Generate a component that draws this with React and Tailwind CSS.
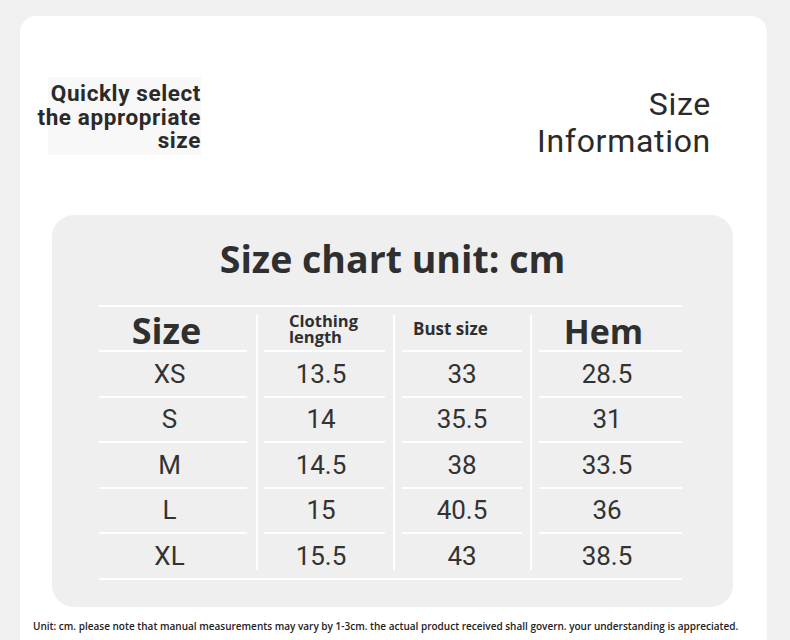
import React from "react";

const rows = [
  ["XS", "13.5", "33", "28.5"],
  ["S", "14", "35.5", "31"],
  ["M", "14.5", "38", "33.5"],
  ["L", "15", "40.5", "36"],
  ["XL", "15.5", "43", "38.5"],
];

const widths = ["w-[148px]", "w-[121px]", "w-[120px]", "w-[143px]"];
const dataPad = ["pr-[7px]", "pr-[7px]", "", "pr-[7px]"];

function HeaderCell({ i }) {
  if (i === 0)
    return (
      <div className="h-[45px] border-b-2 border-white flex items-center justify-center pt-[4px] pr-[13px] font-['Open_Sans',sans-serif] font-bold text-[36px] leading-[34px] text-[#2f2f2f]">
        Size
      </div>
    );
  if (i === 1)
    return (
      <div className="h-[45px] border-b-2 border-white flex items-center pl-[25px] font-['Open_Sans',sans-serif] font-bold text-[16.5px] leading-[16px] text-[#2f2f2f]">
        <div className="pt-[1px]">
          Clothing
          <br />
          length
        </div>
      </div>
    );
  if (i === 2)
    return (
      <div className="h-[45px] border-b-2 border-white flex items-center pl-[11px] font-['Open_Sans',sans-serif] font-bold text-[17px] leading-[15px] text-[#2f2f2f]">
        Bust size
      </div>
    );
  return (
    <div className="h-[45px] border-b-2 border-white flex items-center justify-center pt-[4px] pr-[14px] font-['Open_Sans',sans-serif] font-bold text-[34px] leading-[34px] text-[#2f2f2f]">
      Hem
    </div>
  );
}

function Column({ i }) {
  return (
    <div className={`${widths[i]} flex flex-col`}>
      <HeaderCell i={i} />
      {rows.map((r, ri) => (
        <div
          key={ri}
          className={`${ri === rows.length - 1 ? "h-[43.5px]" : "h-[45.5px] border-b-2 border-white"} ${dataPad[i]} flex items-center justify-center font-['Roboto',sans-serif] text-[26px] leading-[26px] text-[#333333]`}
        >
          {r[i]}
        </div>
      ))}
    </div>
  );
}

function Divider({ offset }) {
  return (
    <div className="w-[17px] flex flex-col">
      <div className={`${offset} w-[2px] flex-1 bg-white mt-[8px] mb-[8px]`} />
    </div>
  );
}

export default function App() {
  return (
    <div className="w-[790px] h-[640px] overflow-hidden bg-[#f0f0f0] pt-[16px]">
      <div className="ml-[20px] w-[747px] h-[700px] rounded-[16px] bg-white">
        <div className="h-[199px] flex justify-between pt-[61px] pl-[28px] pr-[56px]">
          <div className="w-[153px] h-[78px] bg-[#f8f8f8] pt-[5px] flex justify-end">
            <div className="text-right font-['Roboto',sans-serif] font-bold text-[22.5px] leading-[23.5px] text-[#2a2a2a] tracking-[0.6px] whitespace-nowrap">
              Quickly select
              <br />
              the appropriate
              <br />
              size
            </div>
          </div>
          <div className="mt-[9px] text-right font-['Roboto',sans-serif] text-[32px] leading-[37px] text-[#2a2a2a] tracking-[0.7px]">
            Size
            <br />
            Information
          </div>
        </div>
        <div className="ml-[32px] w-[681px] rounded-[22px] bg-[#efefef] pt-[20px] pb-[27px]">
          <div className="text-center font-['Open_Sans',sans-serif] font-bold text-[37.5px] leading-[48px] text-[#2f2f2f]">
            Size chart unit: cm
          </div>
          <div className="ml-[47px] w-[583px] mt-[22px]">
            <div className="h-[2px] bg-white" />
            <div className="flex">
              <Column i={0} />
              <Divider offset="ml-[9px]" />
              <Column i={1} />
              <Divider offset="ml-[8px]" />
              <Column i={2} />
              <Divider offset="ml-[8px]" />
              <Column i={3} />
            </div>
            <div className="h-[2px] bg-white" />
          </div>
        </div>
        <div className="mt-[12.5px] pl-[13px] font-['Open_Sans',sans-serif] font-semibold text-[10px] leading-[14px] text-[#222222] whitespace-nowrap">
          Unit: cm. please note that manual measurements may vary by 1-3cm. the actual product received shall govern. your understanding is appreciated.
        </div>
      </div>
    </div>
  );
}
